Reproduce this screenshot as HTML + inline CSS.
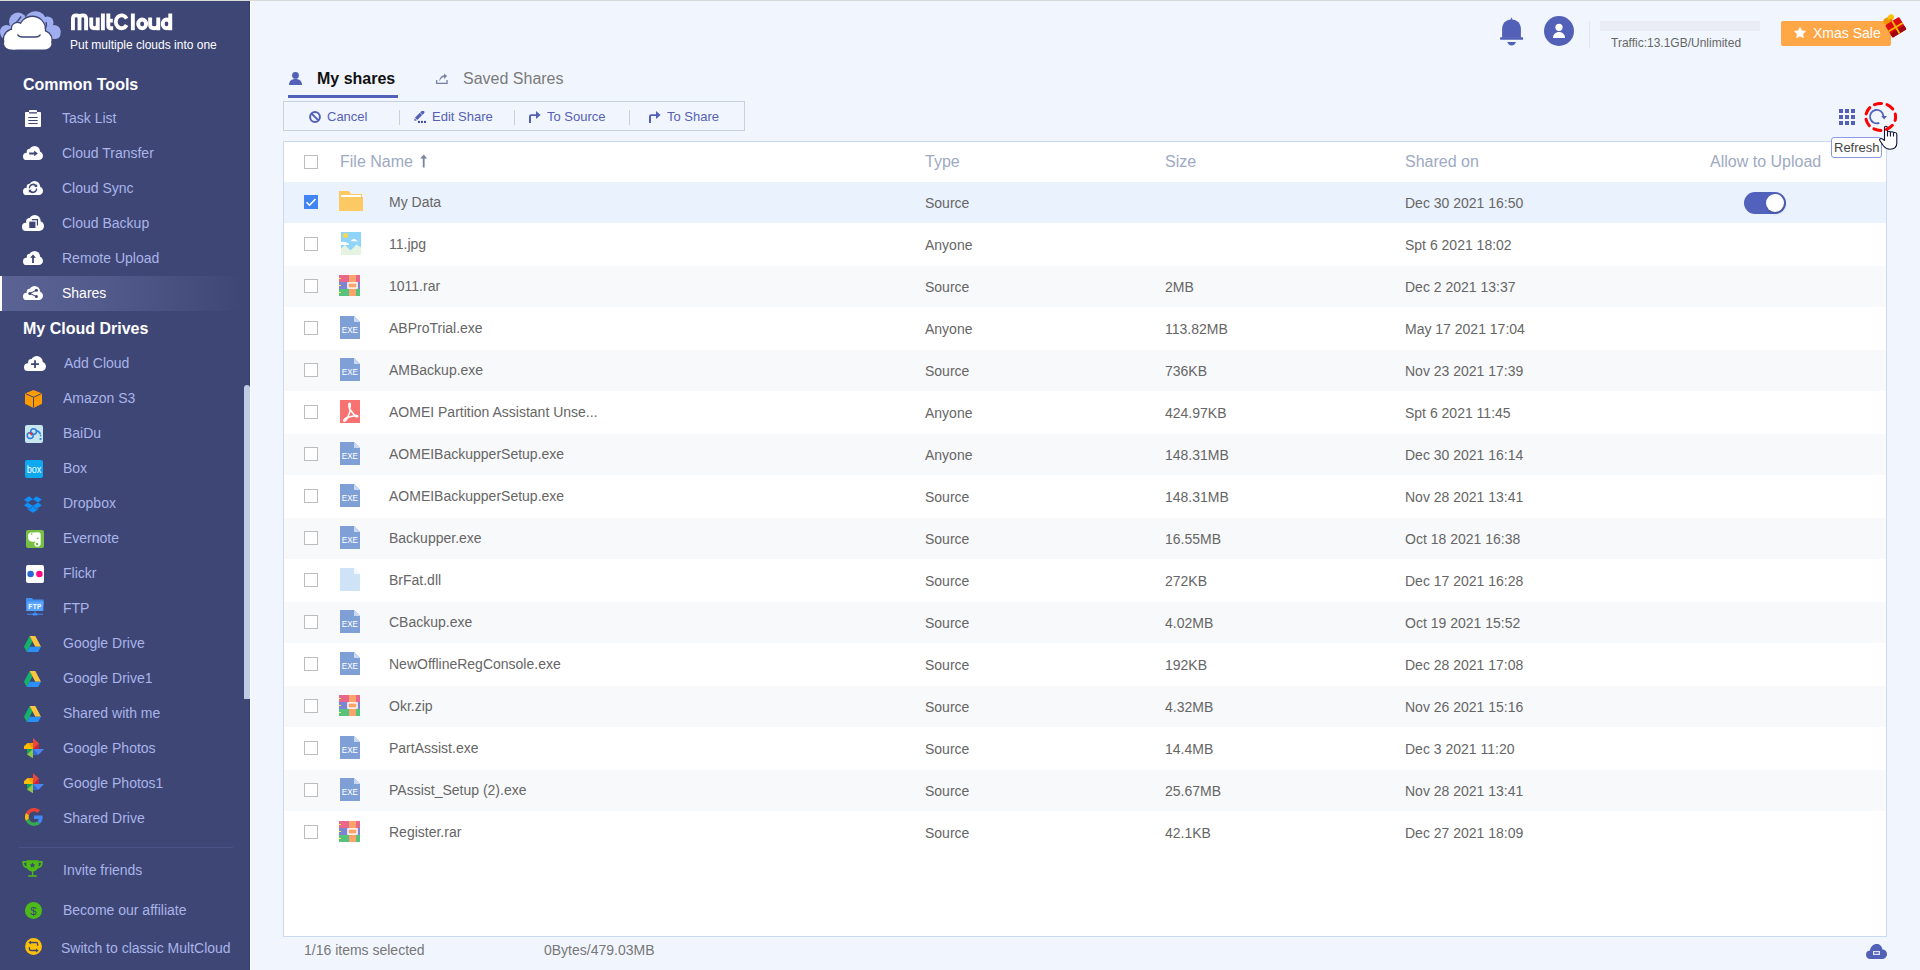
<!DOCTYPE html>
<html><head><meta charset="utf-8"><title>MultCloud - Shares</title>
<style>
*{margin:0;padding:0;box-sizing:border-box}
html,body{width:1920px;height:970px;overflow:hidden;background:#f1f6fe;font-family:"Liberation Sans",sans-serif}
#topline{position:absolute;left:0;top:0;width:1920px;height:1px;background:#d8dad9}
#sb{position:absolute;left:0;top:1px;width:250px;height:969px;background:#3e4675;border-right:1px solid #363c6e}
#sbw{position:absolute;left:250px;top:1px;width:1px;height:969px;background:#fff}
.abs{position:absolute;white-space:nowrap}
.sh{position:absolute;left:23px;font-size:16px;font-weight:bold;color:#fff;line-height:16px}
.si{position:absolute;left:62px;font-size:14px;color:#a9b4ea;line-height:14px}
.sic{position:absolute;left:23px}
#act{position:absolute;left:0;top:275px;width:245px;height:35px;background:linear-gradient(90deg,#5b6394 0%,#535b8c 40%,rgba(62,70,117,0) 100%)}
#actb{position:absolute;left:0;top:275px;width:2px;height:35px;background:#fff}
#tbl{position:absolute;left:283px;top:141px;width:1604px;height:796px;background:#fff;border:1px solid #c9d9f2}
.row{position:absolute;left:0;width:1602px;height:41px}
.cb{position:absolute;left:20px;top:13px;width:14px;height:14px;border:1px solid #bdbdbd;background:#fff}
.cb.on{background:#4185f5;border-color:#4185f5}
.cb.on svg{position:absolute;left:-1px;top:-1px}
.ic{position:absolute;line-height:0}
.t{position:absolute;font-size:14px;color:#666;line-height:14px;top:13px;white-space:nowrap}
.nm{left:105px}.ty{left:641px;top:14px}.sz{left:881px;top:14px}.dt{left:1121px;top:14px}
.hd{position:absolute;top:12px;font-size:16px;color:#9ea9c3;line-height:16px;white-space:nowrap}
.tg{position:absolute;left:1460px;top:10px;width:42px;height:22px;border-radius:11px;background:#5161bc}
.kn{position:absolute;left:22px;top:2px;width:18px;height:18px;border-radius:9px;background:#fff;box-shadow:1px 2px 3px rgba(0,0,0,.15)}
#tb{position:absolute;left:283px;top:101px;width:462px;height:30px;border:1px solid #c7d0e3}
.tbt{position:absolute;top:8px;font-size:13px;color:#5560b5;line-height:13px;white-space:nowrap}
.tbs{position:absolute;top:8px;width:1px;height:15px;background:#c7d0e3}
</style></head>
<body>
<div id="topline"></div>
<div id="sb">
<div class="abs" style="left:0;top:-1px"><svg class="abs" style="left:0;top:0" width="62" height="52" viewBox="0 0 62 52"><circle cx="6.5" cy="31.5" r="6.5" fill="#a0aef0"/><circle cx="18" cy="21.5" r="9" fill="#a0aef0"/><circle cx="35.5" cy="22" r="10.8" fill="#a0aef0"/><circle cx="47.5" cy="22.5" r="6" fill="#a0aef0"/><circle cx="53.8" cy="31.5" r="6.6" fill="#a0aef0"/><rect x="0.5" y="26" width="60" height="13" rx="5" fill="#a0aef0"/><circle cx="14" cy="39.5" r="11.3" fill="#3e4675"/><circle cx="17.5" cy="28.5" r="6.8" fill="#3e4675"/><circle cx="32.3" cy="29.5" r="13.9" fill="#3e4675"/><circle cx="42.5" cy="40" r="10.3" fill="#3e4675"/><rect x="2.7" y="36" width="50.1" height="14.9" rx="9" fill="#3e4675"/><circle cx="14" cy="39.5" r="10" fill="#fff"/><circle cx="17.5" cy="28.5" r="5.5" fill="#fff"/><circle cx="32.3" cy="29.5" r="12.6" fill="#fff"/><circle cx="42.5" cy="40" r="9" fill="#fff"/><rect x="4" y="38" width="47.5" height="11.6" rx="8" fill="#fff"/><path d="M21.2 16.5L16.5 22.5" stroke="#3e4675" stroke-width="1.3"/><path d="M46 22c.8 2 .6 4.5-1 7" fill="none" stroke="#3e4675" stroke-width="1.3"/><path d="M17.5 34.5c1 2 2.5 2.5 5 2.5h13c2.5 0 4-.5 5-2.5" fill="none" stroke="#3e4675" stroke-width="1.4"/></svg><svg class="abs" style="left:0;top:0" width="180" height="34" viewBox="0 0 180 34"><path d="M72.95 30.2V18.6Q72.95 15.35 76.2 15.35Q79.5 15.35 79.5 18.6V30.2M79.5 18.6Q79.5 15.35 82.8 15.35Q86.1 15.35 86.1 18.6V30.2M91.25 17.6V25.3Q91.25 28.25 94.5 28.25Q97.75 28.25 97.75 25.3V17.6M97.75 17.6V30.2M102.9 13.4V30.2M108.3 13.4V25.8Q108.3 28.25 111 28.25H113.2M106.3 20.6H112.8M126.67 18.58A5.85 6.45 0 1 0 126.67 25.02M132.85 13.4V30.2M146.1 23.9A3.95 4.35 0 1 0 138.2 23.9A3.95 4.35 0 1 0 146.1 23.9M150.15 17.6V25.3Q150.15 28.25 154.2 28.25Q158.25 28.25 158.25 25.3V17.6M158.25 17.6V30.2M170.25 13.4V30.2M170.25 23.9A3.75 4.35 0 1 0 162.75 23.9A3.75 4.35 0 1 0 170.25 23.9" fill="none" stroke="#fff" stroke-width="3.9"/></svg></div>
<div class="abs" style="left:70px;top:38px;font-size:12px;color:#fff;line-height:12px">Put multiple clouds into one</div>
<div id="act"></div><div id="actb"></div>
<div class="abs" style="left:0;top:-1px"><svg class="abs" style="left:25px;top:110px" width="16" height="17" viewBox="0 0 16 17"><path d="M1 2h3V0.8C4 .3 4.4 0 5 0h6c.6 0 1 .3 1 .8V2h3c.6 0 1 .4 1 1v13c0 .6-.4 1-1 1H1c-.6 0-1-.4-1-1V3c0-.6.4-1 1-1z" fill="#fff"/><rect x="4" y="2.2" width="8" height="1.3" fill="#3e4675"/><rect x="3.3" y="7" width="9.4" height="1" fill="#3e4675"/><rect x="3.3" y="10" width="9.4" height="1" fill="#3e4675"/><rect x="3.3" y="13" width="9.4" height="1" fill="#3e4675"/></svg>
<svg class="abs" style="left:23px;top:146px" width="20" height="14" viewBox="0 0 20 14" preserveAspectRatio="none"><g fill="#fff"><circle cx="3.6" cy="10.4" r="3.6"/><circle cx="6.9" cy="5.9" r="3.2"/><circle cx="11.6" cy="5.4" r="5.4"/><circle cx="15.7" cy="9.7" r="4.3"/><rect x="3.6" y="8" width="12.4" height="6"/></g><path d="M6.2 6.4h5V4.6l3.6 2.8-3.6 2.8V8.4h-5z" fill="#3e4675"/></svg>
<svg class="abs" style="left:23px;top:181px" width="20" height="14" viewBox="0 0 20 14" preserveAspectRatio="none"><g fill="#fff"><circle cx="3.6" cy="10.4" r="3.6"/><circle cx="6.9" cy="5.9" r="3.2"/><circle cx="11.6" cy="5.4" r="5.4"/><circle cx="15.7" cy="9.7" r="4.3"/><rect x="3.6" y="8" width="12.4" height="6"/></g><path d="M7 7.2a3 3 0 0 1 5.2-2l-1.2.9h3.2V3l-1 .9A4.3 4.3 0 0 0 5.8 7.2z M13 7.6a3 3 0 0 1-5.2 2l1.2-.9H5.8v3.1l1-.9a4.3 4.3 0 0 0 7.4-3.3z" fill="#3e4675"/></svg>
<svg class="abs" style="left:22px;top:215px" width="22" height="16" viewBox="0 0 20 14" preserveAspectRatio="none"><g fill="#fff"><circle cx="3.6" cy="10.4" r="3.6"/><circle cx="6.9" cy="5.9" r="3.2"/><circle cx="11.6" cy="5.4" r="5.4"/><circle cx="15.7" cy="9.7" r="4.3"/><rect x="3.6" y="8" width="12.4" height="6"/></g><path d="M9 3.6h5.6v5.6h-1.1V4.7H9z" fill="#3e4675"/><rect x="6.6" y="5.8" width="5.6" height="5.6" fill="#3e4675"/></svg>
<svg class="abs" style="left:23px;top:251px" width="20" height="14" viewBox="0 0 20 14" preserveAspectRatio="none"><g fill="#fff"><circle cx="3.6" cy="10.4" r="3.6"/><circle cx="6.9" cy="5.9" r="3.2"/><circle cx="11.6" cy="5.4" r="5.4"/><circle cx="15.7" cy="9.7" r="4.3"/><rect x="3.6" y="8" width="12.4" height="6"/></g><path d="M10 3.4l3 3.3h-2.1V12H9.1V6.7H7z" fill="#3e4675"/></svg>
<svg class="abs" style="left:23px;top:286px" width="20" height="14" viewBox="0 0 20 14" preserveAspectRatio="none"><g fill="#fff"><circle cx="3.6" cy="10.4" r="3.6"/><circle cx="6.9" cy="5.9" r="3.2"/><circle cx="11.6" cy="5.4" r="5.4"/><circle cx="15.7" cy="9.7" r="4.3"/><rect x="3.6" y="8" width="12.4" height="6"/></g><circle cx="13.4" cy="4.3" r="1.5" fill="#3e4675"/><circle cx="6.8" cy="7.4" r="1.5" fill="#3e4675"/><circle cx="13.4" cy="10.6" r="1.5" fill="#3e4675"/><path d="M13.4 4.3L6.8 7.4l6.6 3.2" fill="none" stroke="#3e4675" stroke-width="1"/></svg>
<svg class="abs" style="left:24px;top:356px" width="22" height="15" viewBox="0 0 20 14" preserveAspectRatio="none"><g fill="#fff"><circle cx="3.6" cy="10.4" r="3.6"/><circle cx="6.9" cy="5.9" r="3.2"/><circle cx="11.6" cy="5.4" r="5.4"/><circle cx="15.7" cy="9.7" r="4.3"/><rect x="3.6" y="8" width="12.4" height="6"/></g><path d="M9.2 4h1.6v2.8h2.8v1.6h-2.8v2.8H9.2V8.4H6.4V6.8h2.8z" fill="#3e4675"/></svg>
<svg class="abs" style="left:25px;top:390px" width="17" height="18" viewBox="0 0 17 18"><path d="M8.5 0L17 3.6v10.2L8.5 18 0 13.8V3.6z" fill="#ff9a00"/><path d="M0.6 3.7L8.5 7.2l7.9-3.5M8.5 7.2V17.6" fill="none" stroke="#3e4675" stroke-width="1"/></svg>
<svg class="abs" style="left:25px;top:425px" width="18" height="18" viewBox="0 0 18 18"><rect width="18" height="18" rx="2" fill="#c8e6ee"/><circle cx="5.2" cy="10.6" r="3" fill="none" stroke="#2a7ee0" stroke-width="1.5"/><circle cx="8.6" cy="6.6" r="2.8" fill="none" stroke="#2a7ee0" stroke-width="1.5"/><path d="M11.2 5.8C13.5 6 14.8 7.5 15.5 9.3" fill="none" stroke="#2a7ee0" stroke-width="1.4"/><path d="M4.3 7.6L6.8 8.9 5.8 10.3" fill="none" stroke="#f03030" stroke-width="1.5"/><rect x="14.6" y="13" width="1.8" height="1.9" fill="#2a7ee0"/><circle cx="15.6" cy="10.6" r=".8" fill="#2a7ee0"/></svg>
<svg class="abs" style="left:25px;top:460px" width="18" height="18" viewBox="0 0 18 18"><rect width="18" height="18" rx="2" fill="#0da8f0"/><text x="1.8" y="12.6" font-family="Liberation Sans" font-size="10.5" fill="#fff" textLength="14.6" lengthAdjust="spacingAndGlyphs">box</text></svg>
<svg class="abs" style="left:24px;top:496px" width="18" height="17" viewBox="0 0 43 40"><path d="M12.5 0L0 8.1l8.6 6.9 12.6-7.8L12.5 0zM0 21.9l12.5 8.2 8.7-7.3-12.6-7.8L0 21.9zm21.2.9l8.8 7.3 12.4-8.1-8.6-6.9-12.6 7.7zm21.2-14.7L30 0l-8.8 7.3 12.6 7.8 8.6-7zM21.3 24.4l-8.8 7.3-3.7-2.5v2.8l12.5 7.5 12.5-7.5v-2.8l-3.8 2.5-8.7-7.3z" fill="#0f90f8"/></svg>
<svg class="abs" style="left:26px;top:530px" width="18" height="18" viewBox="0 0 18 18"><rect width="18" height="18" rx="2" fill="#78c043"/><path d="M2.1 5.2C2.1 4.2 2.8 3.4 3.8 3.1L6.2 5.2V2.4L12.4 2.3C13.9 2.4 14.7 3.4 14.7 5V13.5C14.7 15.8 13.3 16.8 11.5 16.8 9.6 16.8 8.3 15.6 8.3 14.1 8.3 12.8 9.2 11.9 10.5 11.9L8.5 11.5C6.2 11.9 4.2 11.6 3.1 10.6 2.2 9.6 2.1 7.4 2.1 5.2z" fill="#fff"/><path d="M3.4 4.6L5.4 2.6" stroke="#fff" stroke-width="1.4"/><circle cx="11.8" cy="8.4" r=".8" fill="#78c043"/><circle cx="11.1" cy="14.1" r="1.3" fill="#78c043"/></svg>
<svg class="abs" style="left:26px;top:565px" width="18" height="18" viewBox="0 0 18 18"><rect width="18" height="18" rx="2" fill="#fff"/><circle cx="4.6" cy="9" r="3.3" fill="#2a66d6"/><circle cx="13.4" cy="9" r="3.3" fill="#ff0a84"/></svg>
<svg class="abs" style="left:26px;top:598px" width="18" height="18" viewBox="0 0 18 18"><path d="M0 0h6l1 1.4h10.5V13H0z" fill="#3f8ff2"/><path d="M1.4 3.6h16.4L16.4 13H1z" fill="#5aa6ff"/><text x="9" y="10.8" font-family="Liberation Sans" font-size="6.4" font-weight="bold" fill="#fff" text-anchor="middle" letter-spacing=".4">FTP</text><path d="M9 13v3M1 16.2h16" stroke="#3f8ff2" stroke-width="1"/><rect x="6.5" y="15" width="5" height="2.4" rx="1" fill="#3f8ff2"/></svg>
<svg class="abs" style="left:24px;top:636px" width="17" height="16" viewBox="0 0 1443 1249" preserveAspectRatio="none"><path d="M481 0L0 833l241 416L722 416z" fill="#17b26a"/><path d="M481 0h481l481 833H962z" fill="#fcc63c"/><path d="M241 1249l240-416h962l-241 416z" fill="#2b8ff8"/></svg>
<svg class="abs" style="left:24px;top:671px" width="17" height="16" viewBox="0 0 1443 1249" preserveAspectRatio="none"><path d="M481 0L0 833l241 416L722 416z" fill="#17b26a"/><path d="M481 0h481l481 833H962z" fill="#fcc63c"/><path d="M241 1249l240-416h962l-241 416z" fill="#2b8ff8"/></svg>
<svg class="abs" style="left:24px;top:706px" width="17" height="16" viewBox="0 0 1443 1249" preserveAspectRatio="none"><path d="M481 0L0 833l241 416L722 416z" fill="#17b26a"/><path d="M481 0h481l481 833H962z" fill="#fcc63c"/><path d="M241 1249l240-416h962l-241 416z" fill="#2b8ff8"/></svg>
<svg class="abs" style="left:24px;top:738px" width="21" height="21" viewBox="0 0 21 21"><path d="M9 11H0V8.3L3.5 5H9z" fill="#fcbd04"/><path d="M9 11L3.5 5H9z" fill="#f59b00"/><path d="M9 11V0L14.9 5.5V11z" fill="#e8493a"/><path d="M9 11L14.9 5.5V11z" fill="#c52340"/><path d="M9 11H20L14.5 16.7H9z" fill="#4a86f5"/><path d="M9 11L14.5 16.7H9z" fill="#3168d0"/><path d="M9 11V20.3L3 16.5V11z" fill="#8cc64a"/><path d="M9 11H3V16.5z" fill="#14a350"/></svg>
<svg class="abs" style="left:24px;top:773px" width="21" height="21" viewBox="0 0 21 21"><path d="M9 11H0V8.3L3.5 5H9z" fill="#fcbd04"/><path d="M9 11L3.5 5H9z" fill="#f59b00"/><path d="M9 11V0L14.9 5.5V11z" fill="#e8493a"/><path d="M9 11L14.9 5.5V11z" fill="#c52340"/><path d="M9 11H20L14.5 16.7H9z" fill="#4a86f5"/><path d="M9 11L14.5 16.7H9z" fill="#3168d0"/><path d="M9 11V20.3L3 16.5V11z" fill="#8cc64a"/><path d="M9 11H3V16.5z" fill="#14a350"/></svg>
<svg class="abs" style="left:25px;top:808px" width="18" height="18" viewBox="0 0 48 48"><path fill="#EA4335" d="M24 9.5c3.54 0 6.71 1.22 9.21 3.6l6.85-6.85C35.9 2.38 30.47 0 24 0 14.62 0 6.51 5.38 2.56 13.22l7.98 6.19C12.43 13.72 17.74 9.5 24 9.5z"/><path fill="#4285F4" d="M46.98 24.55c0-1.57-.15-3.09-.38-4.55H24v9.02h12.94c-.58 2.960-2.26 5.48-4.78 7.18l7.73 6c4.51-4.18 7.09-10.36 7.090-17.65z"/><path fill="#FBBC05" d="M10.53 28.59c-.48-1.45-.76-2.99-.76-4.59s.27-3.14.76-4.59l-7.98-6.19C.92 16.46 0 20.12 0 24c0 3.88.92 7.54 2.56 10.78l7.97-6.19z"/><path fill="#34A853" d="M24 48c6.48 0 11.93-2.13 15.89-5.81l-7.73-6c-2.15 1.45-4.92 2.3-8.16 2.3-6.26 0-11.57-4.220-13.47-9.91l-7.98 6.19C6.51 42.62 14.62 48 24 48z"/></svg>
<svg class="abs" style="left:22px;top:860px" width="21" height="18" viewBox="0 0 21 18"><path d="M4.3 0.3H16.7V5.2C16.7 8.8 14 11.2 11.3 11.4V15.2H10V11.4C7 11.2 4.3 8.8 4.3 5.2z" fill="#4cbb17"/><path d="M4.5 1.8H1.2C1 4.8 2.6 7 5.3 7.6M16.5 1.8H19.8C20 4.8 18.4 7 15.7 7.6" fill="none" stroke="#4cbb17" stroke-width="1.7"/><rect x="6.2" y="15.2" width="8.6" height="1.6" fill="#4cbb17"/><path d="M10.5 2.3l.9 1.9 2 .2-1.5 1.3.5 2-1.9-1.1-1.9 1.1.5-2-1.5-1.3 2-.2z" fill="#3e4675"/></svg>
<svg class="abs" style="left:25px;top:902px" width="17" height="17" viewBox="0 0 17 17"><circle cx="8.5" cy="8.5" r="8.5" fill="#4cbb17"/><text x="8.5" y="12.6" font-family="Liberation Sans" font-size="11.5" fill="#3e4675" text-anchor="middle">$</text></svg>
<svg class="abs" style="left:25px;top:938px" width="17" height="17" viewBox="0 0 17 17"><circle cx="8.5" cy="8.5" r="8.4" fill="#ffc107"/><path d="M12.6 7.8V5.9C12.6 5 12.1 4.5 11.2 4.5H5M4.4 9.2V11.1C4.4 12 4.9 12.5 5.8 12.5H12" fill="none" stroke="#3e4675" stroke-width="1.4"/><path d="M6 2.5L3.3 4.5 6 6.5z M11 10.5L13.7 12.5 11 14.5z" fill="#3e4675"/></svg></div>
<div class="sh" style="top:76px">Common Tools</div>
<div class="si" style="top:110px;color:#a9b4ea">Task List</div>
<div class="si" style="top:145px;color:#a9b4ea">Cloud Transfer</div>
<div class="si" style="top:180px;color:#a9b4ea">Cloud Sync</div>
<div class="si" style="top:215px;color:#a9b4ea">Cloud Backup</div>
<div class="si" style="top:250px;color:#a9b4ea">Remote Upload</div>
<div class="si" style="top:285px;color:#fff">Shares</div>
<div class="sh" style="top:320px">My Cloud Drives</div>
<div class="si" style="top:355px;left:64px">Add Cloud</div>
<div class="si" style="top:390px;left:63px">Amazon S3</div>
<div class="si" style="top:425px;left:63px">BaiDu</div>
<div class="si" style="top:460px;left:63px">Box</div>
<div class="si" style="top:495px;left:63px">Dropbox</div>
<div class="si" style="top:530px;left:63px">Evernote</div>
<div class="si" style="top:565px;left:63px">Flickr</div>
<div class="si" style="top:600px;left:63px">FTP</div>
<div class="si" style="top:635px;left:63px">Google Drive</div>
<div class="si" style="top:670px;left:63px">Google Drive1</div>
<div class="si" style="top:705px;left:63px">Shared with me</div>
<div class="si" style="top:740px;left:63px">Google Photos</div>
<div class="si" style="top:775px;left:63px">Google Photos1</div>
<div class="si" style="top:810px;left:63px">Shared Drive</div>
<div class="abs" style="left:19px;top:846px;width:214px;height:1px;background:#4a5287"></div>
<div class="si" style="top:862px;left:63px">Invite friends</div>
<div class="si" style="top:902px;left:63px">Become our affiliate</div>
<div class="si" style="top:940px;left:61px">Switch to classic MultCloud</div>
<div class="abs" style="left:244px;top:384px;width:6px;height:314px;border-radius:3px 3px 0 0;background:#c0cbe6"></div>
</div>
<div id="sbw"></div>
<svg class="abs" style="left:1500px;top:17px" width="24" height="29" viewBox="0 0 24 29"><path d="M10.4 3L11.5 0.2 12.6 3z" fill="#5260b8"/><path d="M2.1 20.7V12.5C2.1 6.5 5.5 3 11.5 2.6 17.5 3 20.9 6.5 20.9 12.5V20.7z" fill="#5260b8"/><rect x="0.1" y="20.2" width="23" height="2.6" rx="0.6" fill="#5260b8"/><path d="M7.2 25H16C15 27.4 13.5 28.6 11.6 28.6 9.7 28.6 8.2 27.4 7.2 25z" fill="#5260b8"/></svg>
<svg class="abs" style="left:1544px;top:16px" width="30" height="30" viewBox="0 0 30 30"><circle cx="15" cy="15" r="15" fill="#5260b8"/><circle cx="15" cy="11.3" r="3.6" fill="#fff"/><path d="M9 21.9c0-3.6 2.5-6 6-6s6 2.4 6 6z" fill="#fff"/></svg>
<div class="abs" style="left:1589px;top:21px;width:1px;height:27px;background:#e0e4ee"></div>
<div class="abs" style="left:1600px;top:21px;width:160px;height:10px;background:#e9ecf5"></div>
<div class="abs" style="left:1611px;top:37px;font-size:12px;color:#666;line-height:12px">Traffic:13.1GB/Unlimited</div>
<div class="abs" style="left:1781px;top:21px;width:110px;height:25px;border-radius:2px;background:#ffa646"></div>
<svg class="abs" style="left:1794px;top:27px" width="12" height="11" viewBox="0 0 24 22"><path d="M12 0.5l3.4 6.9 7.6 1.1-5.5 5.4 1.3 7.6L12 17.9l-6.8 3.6 1.3-7.6L1 8.5l7.6-1.1z" fill="#fff" stroke="#fff" stroke-width="1.2" stroke-linejoin="round"/></svg>
<div class="abs" style="left:1813px;top:26px;font-size:14px;color:#fff;line-height:14px">Xmas Sale</div>
<svg class="abs" style="left:1878px;top:8px" width="34" height="34" viewBox="0 0 34 34"><g transform="translate(17.4 18.55) rotate(-31)"><ellipse cx="-4.2" cy="-9.3" rx="3.8" ry="3" fill="#f29600"/><ellipse cx="0.8" cy="-10.2" rx="3.3" ry="2.8" fill="#ffbe00"/><rect x="-1.8" y="-9" width="2.4" height="3" fill="#e08800"/><rect x="-8.15" y="-6.45" width="16.3" height="14.6" rx="1.4" fill="#dd0a10"/><rect x="-8.15" y="3.6" width="16.3" height="4.55" rx="1" fill="#9e070b"/><rect x="-0.9" y="-6.45" width="1.8" height="14.6" fill="#f6b800"/><rect x="-8.15" y="-0.2" width="16.3" height="1.8" fill="#f6b800"/></g></svg>
<svg class="abs" style="left:289px;top:72px" width="13" height="13" viewBox="0 0 13 13"><circle cx="6.5" cy="3.4" r="3.4" fill="#5260b8"/><path d="M0 13c0-4 2.5-6 6.5-6s6.5 2 6.5 6z" fill="#5260b8"/></svg>
<div class="abs" style="left:317px;top:71px;font-size:16px;font-weight:bold;color:#111;line-height:16px">My shares</div>
<div class="abs" style="left:288px;top:95px;width:110px;height:3px;background:#5260b8"></div>
<svg class="abs" style="left:436px;top:72px" width="13" height="13" viewBox="0 0 13 13"><path d="M0 8.1V12.1H11.7V8.1H10.4V10.7H1.3V8.1z" fill="#7881a3"/><path d="M3.4 9.4C3.4 6.2 5.3 3.5 8.1 3.3V1.4L11.1 4.1 8.1 6.9V5C6.2 5.1 4.6 6.5 3.4 9.4z" fill="#7881a3"/></svg>
<div class="abs" style="left:463px;top:71px;font-size:16px;color:#7a7a7a;line-height:16px">Saved Shares</div>
<div id="tb">
<svg class="abs" style="left:25px;top:9px" width="12" height="12" viewBox="0 0 12 12"><circle cx="6" cy="6" r="4.9" fill="none" stroke="#5260b8" stroke-width="2"/><path d="M2.6 2.6l6.8 6.8" stroke="#5260b8" stroke-width="2"/></svg>
<div class="tbt" style="left:43px">Cancel</div>
<div class="tbs" style="left:115px"></div>
<svg class="abs" style="left:130px;top:9px" width="14" height="13" viewBox="0 0 14 13"><g transform="translate(4.85 5.1) rotate(-45)"><path d="M-6.6 0L-4.5-1.6V1.6z" fill="#5260b8"/><rect x="-3.9" y="-1.65" width="7" height="3.3" fill="#5260b8"/><path d="M3.6-1.65H5.5A1.65 1.65 0 0 1 5.5 1.65H3.6z" fill="#5260b8"/></g><rect x="4" y="9.9" width="1.9" height="2.1" fill="#3a48a8"/><rect x="7" y="9.9" width="1.9" height="2.1" fill="#3a48a8"/><rect x="10" y="9.9" width="1.9" height="2.1" fill="#3a48a8"/></svg>
<div class="tbt" style="left:148px">Edit Share</div>
<div class="tbs" style="left:230px"></div>
<svg class="abs" style="left:245px;top:9px" width="13" height="13" viewBox="0 0 13 13"><path d="M0 11.9V5.4Q0 3.2 2.2 3.2H7V0L11.6 4.1 7 8.1V5.1H2V11.9z" fill="#5260b8"/></svg>
<div class="tbt" style="left:263px">To Source</div>
<div class="tbs" style="left:345px"></div>
<svg class="abs" style="left:365px;top:9px" width="13" height="13" viewBox="0 0 13 13"><path d="M0 11.9V5.4Q0 3.2 2.2 3.2H7V0L11.6 4.1 7 8.1V5.1H2V11.9z" fill="#5260b8"/></svg>
<div class="tbt" style="left:383px">To Share</div>
</div>
<svg class="abs" style="left:1839px;top:109px" width="16" height="16" viewBox="0 0 16 16"><rect x="0" y="0" width="4" height="4" fill="#5260b8"/><rect x="6" y="0" width="4" height="4" fill="#5260b8"/><rect x="12" y="0" width="4" height="4" fill="#5260b8"/><rect x="0" y="6" width="4" height="4" fill="#5260b8"/><rect x="6" y="6" width="4" height="4" fill="#5260b8"/><rect x="12" y="6" width="4" height="4" fill="#5260b8"/><rect x="0" y="12" width="4" height="4" fill="#5260b8"/><rect x="6" y="12" width="4" height="4" fill="#5260b8"/><rect x="12" y="12" width="4" height="4" fill="#5260b8"/></svg>
<div id="tbl">
<div class="cb" style="top:13px"></div>
<div class="hd" style="left:56px">File Name</div>
<svg class="abs" style="left:136px;top:12px" width="8" height="14" viewBox="0 0 8 14"><path d="M3.7 0.4L0.2 4.5h2.6V13.5h1.8V4.5h2.6z" fill="#7a84a4"/></svg>
<div class="hd" style="left:641px">Type</div>
<div class="hd" style="left:881px">Size</div>
<div class="hd" style="left:1121px">Shared on</div>
<div class="hd" style="left:1426px">Allow to Upload</div>
<div class="row" style="top:40px;background:#eaf2fd"><div class="cb on"><svg width="14" height="14" viewBox="0 0 14 14"><path d="M2.5 7.2l3 3 6-6.2" fill="none" stroke="#fff" stroke-width="1.6"/></svg></div><div class="ic" style="left:55px;top:9px"><svg width="24" height="20" viewBox="0 0 24 20"><path d="M1 0h9l2 3h11v17H0V0z" fill="#fdc962"/><rect x="2" y="4" width="20" height="2" fill="#fff"/><path d="M0 6h24v14H0z" fill="#fdc962"/></svg></div><div class="t nm">My Data</div><div class="t ty">Source</div><div class="t sz"></div><div class="t dt">Dec 30 2021 16:50</div><div class="tg"><div class="kn"></div></div></div>

<div class="row" style="top:82px;background:#ffffff"><div class="cb"></div><div class="ic" style="left:57px;top:8px"><svg width="20" height="23" viewBox="0 0 20 23"><rect width="20" height="23" fill="#8fd4f9"/><circle cx="4.5" cy="3.6" r="2.5" fill="#ffd54a"/><path d="M10 9.3c.5-1.6 1.8-2.3 3-2.3s2.3.7 2.8 1.7c1 0 2 .3 2.5.6H10z" fill="#fff"/><path d="M0 14.5V10.2c.8-.6 2-.7 3-.2.8-.3 2.2 0 3 .8 1 .2 2 .8 2.3 1.6-.5.4-1 .5-1.5.5H0z" fill="#fff"/><path d="M0 16.5l4-3.6 5.5 5.5 6-6L20 15.5v7.5H0z" fill="#e7f3e1"/></svg></div><div class="t nm">11.jpg</div><div class="t ty">Anyone</div><div class="t sz"></div><div class="t dt">Spt 6 2021 18:02</div></div>

<div class="row" style="top:124px;background:#f8f9fb"><div class="cb"></div><div class="ic" style="left:55px;top:9px"><svg width="21" height="21" viewBox="0 0 21 21"><rect width="21" height="7" fill="#e8678b"/><rect y="7" width="21" height="7" fill="#7d84d2"/><rect y="14" width="21" height="7" fill="#56c27b"/><rect x="10" width="7" height="21" fill="#fda46d"/><rect x="8.2" y="7.2" width="10.6" height="6.6" fill="#fff"/><rect x="9.6" y="8.6" width="7.8" height="3.8" fill="#fda46d"/><rect x="0" y="3" width="2" height="1" fill="#ffee33"/><rect x="0" y="10" width="2" height="1" fill="#ffee33"/><rect x="0" y="17" width="2" height="1" fill="#ffee33"/></svg></div><div class="t nm">1011.rar</div><div class="t ty">Source</div><div class="t sz">2MB</div><div class="t dt">Dec 2 2021 13:37</div></div>

<div class="row" style="top:166px;background:#ffffff"><div class="cb"></div><div class="ic" style="left:56px;top:8px"><svg width="20" height="23" viewBox="0 0 20 23"><path d="M0 0h14l6 6v17H0z" fill="#7f9fd7"/><path d="M14 0l6 6h-6z" fill="#c9d9f4"/><text x="1.8" y="17.3" font-family="Liberation Sans" font-size="9.6" fill="#fff" textLength="16.2" lengthAdjust="spacingAndGlyphs">EXE</text></svg></div><div class="t nm">ABProTrial.exe</div><div class="t ty">Anyone</div><div class="t sz">113.82MB</div><div class="t dt">May 17 2021 17:04</div></div>

<div class="row" style="top:208px;background:#f8f9fb"><div class="cb"></div><div class="ic" style="left:56px;top:8px"><svg width="20" height="23" viewBox="0 0 20 23"><path d="M0 0h14l6 6v17H0z" fill="#7f9fd7"/><path d="M14 0l6 6h-6z" fill="#c9d9f4"/><text x="1.8" y="17.3" font-family="Liberation Sans" font-size="9.6" fill="#fff" textLength="16.2" lengthAdjust="spacingAndGlyphs">EXE</text></svg></div><div class="t nm">AMBackup.exe</div><div class="t ty">Source</div><div class="t sz">736KB</div><div class="t dt">Nov 23 2021 17:39</div></div>

<div class="row" style="top:250px;background:#ffffff"><div class="cb"></div><div class="ic" style="left:56px;top:8px"><svg width="20" height="23" viewBox="0 0 20 23"><rect width="20" height="23" fill="#f87272"/><path d="M9.2 3.5c1.2-.8 1.8 1 .5 5.5l5 6.5c2.5-.5 3.8.5 2.8 1.2-.8.6-2.3-.2-3.3-1l-6 1.5c-2 3-3.5 4.5-4.3 3.8-.8-.8 1-2.5 4-4l2.3-6c-1.3-3.5-1.6-6.5-1-7.5z" fill="none" stroke="#fff" stroke-width="1.5"/></svg></div><div class="t nm">AOMEI Partition Assistant Unse...</div><div class="t ty">Anyone</div><div class="t sz">424.97KB</div><div class="t dt">Spt 6 2021 11:45</div></div>

<div class="row" style="top:292px;background:#f8f9fb"><div class="cb"></div><div class="ic" style="left:56px;top:8px"><svg width="20" height="23" viewBox="0 0 20 23"><path d="M0 0h14l6 6v17H0z" fill="#7f9fd7"/><path d="M14 0l6 6h-6z" fill="#c9d9f4"/><text x="1.8" y="17.3" font-family="Liberation Sans" font-size="9.6" fill="#fff" textLength="16.2" lengthAdjust="spacingAndGlyphs">EXE</text></svg></div><div class="t nm">AOMEIBackupperSetup.exe</div><div class="t ty">Anyone</div><div class="t sz">148.31MB</div><div class="t dt">Dec 30 2021 16:14</div></div>

<div class="row" style="top:334px;background:#ffffff"><div class="cb"></div><div class="ic" style="left:56px;top:8px"><svg width="20" height="23" viewBox="0 0 20 23"><path d="M0 0h14l6 6v17H0z" fill="#7f9fd7"/><path d="M14 0l6 6h-6z" fill="#c9d9f4"/><text x="1.8" y="17.3" font-family="Liberation Sans" font-size="9.6" fill="#fff" textLength="16.2" lengthAdjust="spacingAndGlyphs">EXE</text></svg></div><div class="t nm">AOMEIBackupperSetup.exe</div><div class="t ty">Source</div><div class="t sz">148.31MB</div><div class="t dt">Nov 28 2021 13:41</div></div>

<div class="row" style="top:376px;background:#f8f9fb"><div class="cb"></div><div class="ic" style="left:56px;top:8px"><svg width="20" height="23" viewBox="0 0 20 23"><path d="M0 0h14l6 6v17H0z" fill="#7f9fd7"/><path d="M14 0l6 6h-6z" fill="#c9d9f4"/><text x="1.8" y="17.3" font-family="Liberation Sans" font-size="9.6" fill="#fff" textLength="16.2" lengthAdjust="spacingAndGlyphs">EXE</text></svg></div><div class="t nm">Backupper.exe</div><div class="t ty">Source</div><div class="t sz">16.55MB</div><div class="t dt">Oct 18 2021 16:38</div></div>

<div class="row" style="top:418px;background:#ffffff"><div class="cb"></div><div class="ic" style="left:56px;top:8px"><svg width="20" height="23" viewBox="0 0 20 23"><path d="M0 0h14l6 6v17H0z" fill="#cfe3f8"/><path d="M14 0l6 6h-6z" fill="#f3f8fe"/></svg></div><div class="t nm">BrFat.dll</div><div class="t ty">Source</div><div class="t sz">272KB</div><div class="t dt">Dec 17 2021 16:28</div></div>

<div class="row" style="top:460px;background:#f8f9fb"><div class="cb"></div><div class="ic" style="left:56px;top:8px"><svg width="20" height="23" viewBox="0 0 20 23"><path d="M0 0h14l6 6v17H0z" fill="#7f9fd7"/><path d="M14 0l6 6h-6z" fill="#c9d9f4"/><text x="1.8" y="17.3" font-family="Liberation Sans" font-size="9.6" fill="#fff" textLength="16.2" lengthAdjust="spacingAndGlyphs">EXE</text></svg></div><div class="t nm">CBackup.exe</div><div class="t ty">Source</div><div class="t sz">4.02MB</div><div class="t dt">Oct 19 2021 15:52</div></div>

<div class="row" style="top:502px;background:#ffffff"><div class="cb"></div><div class="ic" style="left:56px;top:8px"><svg width="20" height="23" viewBox="0 0 20 23"><path d="M0 0h14l6 6v17H0z" fill="#7f9fd7"/><path d="M14 0l6 6h-6z" fill="#c9d9f4"/><text x="1.8" y="17.3" font-family="Liberation Sans" font-size="9.6" fill="#fff" textLength="16.2" lengthAdjust="spacingAndGlyphs">EXE</text></svg></div><div class="t nm">NewOfflineRegConsole.exe</div><div class="t ty">Source</div><div class="t sz">192KB</div><div class="t dt">Dec 28 2021 17:08</div></div>

<div class="row" style="top:544px;background:#f8f9fb"><div class="cb"></div><div class="ic" style="left:55px;top:9px"><svg width="21" height="21" viewBox="0 0 21 21"><rect width="21" height="7" fill="#e8678b"/><rect y="7" width="21" height="7" fill="#7d84d2"/><rect y="14" width="21" height="7" fill="#56c27b"/><rect x="10" width="7" height="21" fill="#fda46d"/><rect x="8.2" y="7.2" width="10.6" height="6.6" fill="#fff"/><rect x="9.6" y="8.6" width="7.8" height="3.8" fill="#fda46d"/><rect x="0" y="3" width="2" height="1" fill="#ffee33"/><rect x="0" y="10" width="2" height="1" fill="#ffee33"/><rect x="0" y="17" width="2" height="1" fill="#ffee33"/></svg></div><div class="t nm">Okr.zip</div><div class="t ty">Source</div><div class="t sz">4.32MB</div><div class="t dt">Nov 26 2021 15:16</div></div>

<div class="row" style="top:586px;background:#ffffff"><div class="cb"></div><div class="ic" style="left:56px;top:8px"><svg width="20" height="23" viewBox="0 0 20 23"><path d="M0 0h14l6 6v17H0z" fill="#7f9fd7"/><path d="M14 0l6 6h-6z" fill="#c9d9f4"/><text x="1.8" y="17.3" font-family="Liberation Sans" font-size="9.6" fill="#fff" textLength="16.2" lengthAdjust="spacingAndGlyphs">EXE</text></svg></div><div class="t nm">PartAssist.exe</div><div class="t ty">Source</div><div class="t sz">14.4MB</div><div class="t dt">Dec 3 2021 11:20</div></div>

<div class="row" style="top:628px;background:#f8f9fb"><div class="cb"></div><div class="ic" style="left:56px;top:8px"><svg width="20" height="23" viewBox="0 0 20 23"><path d="M0 0h14l6 6v17H0z" fill="#7f9fd7"/><path d="M14 0l6 6h-6z" fill="#c9d9f4"/><text x="1.8" y="17.3" font-family="Liberation Sans" font-size="9.6" fill="#fff" textLength="16.2" lengthAdjust="spacingAndGlyphs">EXE</text></svg></div><div class="t nm">PAssist_Setup (2).exe</div><div class="t ty">Source</div><div class="t sz">25.67MB</div><div class="t dt">Nov 28 2021 13:41</div></div>

<div class="row" style="top:670px;background:#ffffff"><div class="cb"></div><div class="ic" style="left:55px;top:9px"><svg width="21" height="21" viewBox="0 0 21 21"><rect width="21" height="7" fill="#e8678b"/><rect y="7" width="21" height="7" fill="#7d84d2"/><rect y="14" width="21" height="7" fill="#56c27b"/><rect x="10" width="7" height="21" fill="#fda46d"/><rect x="8.2" y="7.2" width="10.6" height="6.6" fill="#fff"/><rect x="9.6" y="8.6" width="7.8" height="3.8" fill="#fda46d"/><rect x="0" y="3" width="2" height="1" fill="#ffee33"/><rect x="0" y="10" width="2" height="1" fill="#ffee33"/><rect x="0" y="17" width="2" height="1" fill="#ffee33"/></svg></div><div class="t nm">Register.rar</div><div class="t ty">Source</div><div class="t sz">42.1KB</div><div class="t dt">Dec 27 2021 18:09</div></div>

</div>
<div class="abs" style="left:1831px;top:137px;width:51px;height:21px;background:#fff;border:1px solid #8b9ae6;border-radius:3px"></div>
<div class="abs" style="left:1834px;top:141px;font-size:13px;color:#444;line-height:13px">Refresh</div>
<svg class="abs" style="left:1874px;top:122px" width="28" height="30" viewBox="0 0 28 30"><path d="M10.5 18.5V6Q10.5 4.3 12 4.3Q13.5 4.3 13.5 6V10.5Q13.5 9.3 15 9.3Q16.4 9.3 16.4 10.5Q16.4 9.8 18 9.8Q19.5 9.8 19.5 11Q19.5 10.5 21 10.5Q22.8 10.5 22.8 12.5V21Q22.8 27.2 16 27.2Q12 27.2 9.5 24L5.8 18.5Q5 17 6.8 16.5Q8.5 16.5 10.5 18.5Z" fill="#fff" stroke="#11113a" stroke-width="1.1" stroke-linejoin="round"/><path d="M13.5 10.5V14.5M16.4 10.5V14.5M19.5 11V14.5" stroke="#11113a" stroke-width="1.1"/></svg>
<svg class="abs" style="left:1862px;top:100px" width="38" height="34" viewBox="0 0 38 34"><path d="M17.28 22.9A6.75 6.75 0 1 1 21.47 16.3" fill="none" stroke="#5260b8" stroke-width="1.8"/><path d="M19.2 16.1h5.8l-2.9 3.3z" fill="#5260b8"/><ellipse cx="18.7" cy="16.9" rx="14.9" ry="13.5" fill="none" stroke="#ff0000" stroke-width="3" stroke-linecap="round" stroke-dasharray="7.2 5.56" stroke-dashoffset="3.6"/></svg>
<div class="abs" style="left:304px;top:943px;font-size:14px;color:#777;line-height:14px">1/16 items selected</div>
<div class="abs" style="left:544px;top:943px;font-size:14px;color:#777;line-height:14px">0Bytes/479.03MB</div>
<svg class="abs" style="left:1866px;top:944px" width="21" height="15" viewBox="0 0 21 15"><path d="M4.5 15C1.5 15 0 13 0 10.5S2 6.5 4 6.5C4.5 2.5 7.5 0 10.5 0S16 2 16.5 5.5c2.5 0 4.5 2 4.5 4.5S19 15 16.5 15z" fill="#5260b8"/><rect x="7" y="7" width="7" height="4" fill="#dfe4f5"/><rect x="8.2" y="8.2" width="4.6" height="1.6" fill="#5260b8"/></svg>
</body></html>
